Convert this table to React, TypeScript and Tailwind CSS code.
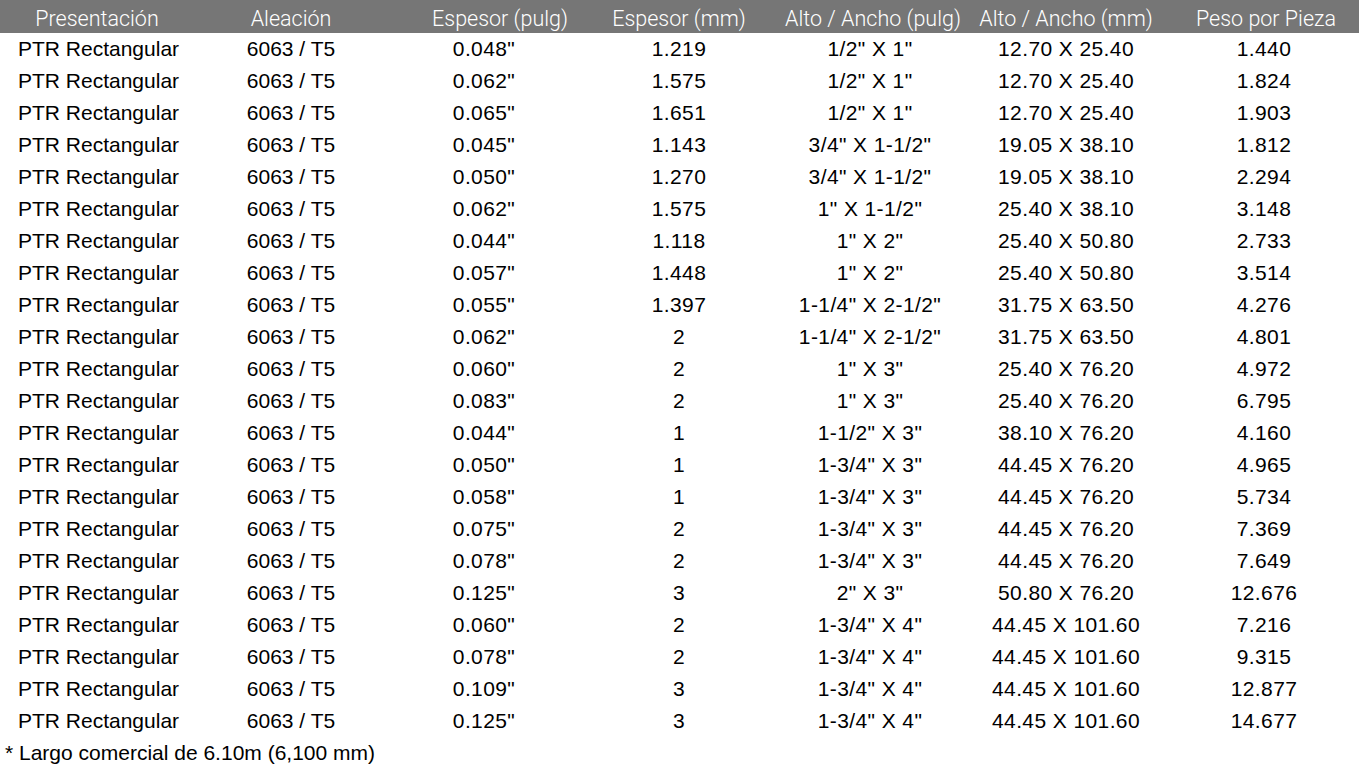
const headers = [
  'Presentación',
  'Aleación',
  'Espesor (pulg)',
  'Espesor (mm)',
  'Alto / Ancho (pulg)',
  'Alto / Ancho (mm)',
  'Peso por Pieza',
];

// espesor pulg, espesor mm, alto/ancho pulg, alto/ancho mm, peso
const rows: string[][] = [
  ['0.048"', '1.219', '1/2" X 1"', '12.70 X 25.40', '1.440'],
  ['0.062"', '1.575', '1/2" X 1"', '12.70 X 25.40', '1.824'],
  ['0.065"', '1.651', '1/2" X 1"', '12.70 X 25.40', '1.903'],
  ['0.045"', '1.143', '3/4" X 1-1/2"', '19.05 X 38.10', '1.812'],
  ['0.050"', '1.270', '3/4" X 1-1/2"', '19.05 X 38.10', '2.294'],
  ['0.062"', '1.575', '1" X 1-1/2"', '25.40 X 38.10', '3.148'],
  ['0.044"', '1.118', '1" X 2"', '25.40 X 50.80', '2.733'],
  ['0.057"', '1.448', '1" X 2"', '25.40 X 50.80', '3.514'],
  ['0.055"', '1.397', '1-1/4" X 2-1/2"', '31.75 X 63.50', '4.276'],
  ['0.062"', '2', '1-1/4" X 2-1/2"', '31.75 X 63.50', '4.801'],
  ['0.060"', '2', '1" X 3"', '25.40 X 76.20', '4.972'],
  ['0.083"', '2', '1" X 3"', '25.40 X 76.20', '6.795'],
  ['0.044"', '1', '1-1/2" X 3"', '38.10 X 76.20', '4.160'],
  ['0.050"', '1', '1-3/4" X 3"', '44.45 X 76.20', '4.965'],
  ['0.058"', '1', '1-3/4" X 3"', '44.45 X 76.20', '5.734'],
  ['0.075"', '2', '1-3/4" X 3"', '44.45 X 76.20', '7.369'],
  ['0.078"', '2', '1-3/4" X 3"', '44.45 X 76.20', '7.649'],
  ['0.125"', '3', '2" X 3"', '50.80 X 76.20', '12.676'],
  ['0.060"', '2', '1-3/4" X 4"', '44.45 X 101.60', '7.216'],
  ['0.078"', '2', '1-3/4" X 4"', '44.45 X 101.60', '9.315'],
  ['0.109"', '3', '1-3/4" X 4"', '44.45 X 101.60', '12.877'],
  ['0.125"', '3', '1-3/4" X 4"', '44.45 X 101.60', '14.677'],
];

const cols = 'grid grid-cols-[194px_194px_224px_134px_254px_132px_268px]';
const num = 'flex items-center justify-center whitespace-nowrap tracking-[0.4px]';

export default function App() {
  return (
    <div className="w-[1359px] h-[769px] overflow-hidden bg-white font-['Liberation_Sans',Arial,sans-serif] text-[21px] text-black">
      {/* encabezado */}
      <div className={`${cols} h-[33px] pt-[3px] bg-[#767676] text-white font-['Roboto',sans-serif] font-light text-[21.5px]`}>
        {headers.map((h) => (
          <div key={h} className="flex items-center justify-center whitespace-nowrap">
            {h}
          </div>
        ))}
      </div>

      {rows.map((r, i) => (
        <div key={i} className={`${cols} h-[32px]`}>
          <div className="flex items-center pl-[18px] whitespace-nowrap">PTR Rectangular</div>
          <div className="flex items-center justify-center whitespace-nowrap">6063 / T5</div>
          <div className={`${num} pr-[32px]`}>{r[0]}</div>
          <div className={num}>{r[1]}</div>
          <div className={`${num} pr-[6px]`}>{r[2]}</div>
          <div className={num}>{r[3]}</div>
          <div className={`${num} pr-[4px]`}>{r[4]}</div>
        </div>
      ))}

      <div className="h-[32px] flex items-center pl-[5px] whitespace-nowrap">
        * Largo comercial de 6.10m (6,100 mm)
      </div>
    </div>
  );
}
